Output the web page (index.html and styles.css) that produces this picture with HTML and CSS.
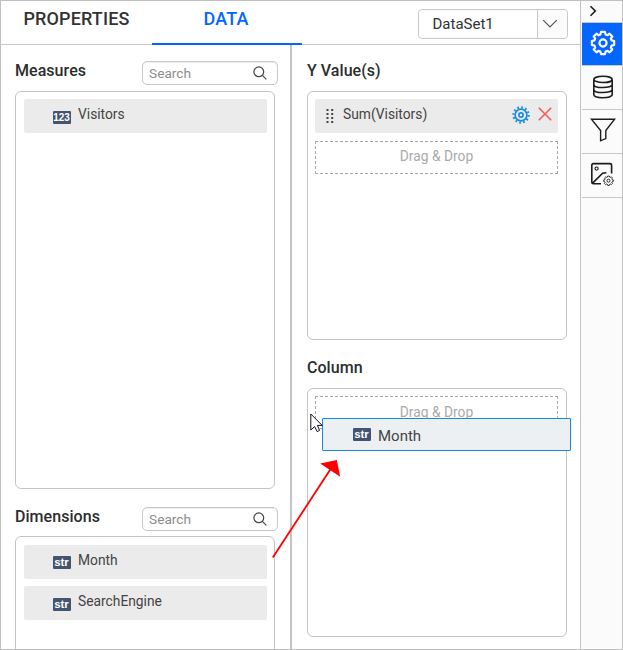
FILE: index.html
```html
<!DOCTYPE html>
<html lang="en">
<head>
<meta charset="utf-8">
<title>Data panel</title>
<link rel="stylesheet" href="styles.css">
</head>
<body>
<svg class="defs" aria-hidden="true">
  <symbol id="cog" viewBox="-12 -12 24 24">
    <path d="M10.3-1.8V1.8L7.9 2.4 7.2 4.2 8.6 6 6 8.6 4.2 7.2 2.4 7.9 1.8 10.3H-1.8L-2.4 7.9-4.2 7.2-6 8.6-8.6 6-7.2 4.2-7.9 2.4-10.3 1.8V-1.8L-7.9-2.4-7.2-4.2-8.6-6-6-8.6-4.2-7.2-2.4-7.9-1.8-10.3H1.8L2.4-7.9 4.2-7.2 6-8.6 8.6-6 7.2-4.2 7.9-2.4Z"/>
    <circle r="3.3"/>
  </symbol>
  <symbol id="lens" viewBox="0 0 14 14">
    <circle cx="5.8" cy="5.8" r="4.9"/>
    <path d="M9.4 9.4 13.3 13.3"/>
  </symbol>
</svg>
<div class="window">
  <div class="designer">
    <header class="tabs">
      <div class="tab">PROPERTIES</div>
      <div class="tab active">DATA</div>
      <div class="select"><span class="select-value">DataSet1</span><span class="select-toggle"><svg width="16" height="10" viewBox="0 0 16 10"><path d="M1.2 1.2 8 8 14.8 1.2"/></svg></span></div>
    </header>
    <div class="columns">
      <section class="fields">
        <div class="head">
          <h2>Measures</h2>
          <div class="search"><span>Search</span><svg width="14" height="14"><use href="#lens"/></svg></div>
        </div>
        <div class="box measures">
          <div class="item"><span class="badge">123</span><span class="name">Visitors</span></div>
        </div>
        <div class="head second">
          <h2>Dimensions</h2>
          <div class="search"><span>Search</span><svg width="14" height="14"><use href="#lens"/></svg></div>
        </div>
        <div class="box dimensions">
          <div class="item"><span class="badge raised">str</span><span class="name">Month</span></div>
          <div class="item"><span class="badge">str</span><span class="name">SearchEngine</span></div>
        </div>
      </section>
      <section class="bindings">
        <h2>Y Value(s)</h2>
        <div class="box values">
          <div class="item bound">
            <svg class="grip" width="8" height="15" viewBox="0 0 8 15"><path d="M1.5 1V15M6.2 1V15"/></svg>
            <span class="name">Sum(Visitors)</span>
            <svg class="item-gear" width="18" height="18" viewBox="-9 -9 18 18"><circle r="5.9"/><circle r="2.1"/><circle class="teeth" r="7.6"/></svg>
            <svg class="remove" width="14" height="14" viewBox="0 0 14 14"><path d="M.8.8 13.2 13.2M13.2.8.8 13.2"/></svg>
          </div>
          <div class="drop">Drag &amp; Drop</div>
        </div>
        <h2 class="column-title">Column</h2>
        <div class="box column">
          <div class="drop">Drag &amp; Drop</div>
        </div>
      </section>
    </div>
  </div>
  <nav class="rail">
    <div class="rail-toggle"><svg width="8" height="12" viewBox="0 0 8 12"><path d="M1.5 1.2 6.3 6 1.5 10.8"/></svg></div>
    <div class="rail-item selected"><svg width="26" height="26"><use href="#cog"/></svg></div>
    <div class="rail-item"><svg width="22" height="24" viewBox="0 0 22 24"><ellipse cx="11" cy="4.4" rx="9.2" ry="3.1"/><path d="M1.8 4.4V19.6C1.8 23.8 20.2 23.8 20.2 19.6V4.4M1.8 9.4C1.8 13.6 20.2 13.6 20.2 9.4M1.8 14.4C1.8 18.6 20.2 18.6 20.2 14.4"/></svg></div>
    <div class="rail-item"><svg class="funnel" width="26" height="24" viewBox="0 0 26 24"><path d="M1.4 1.2H24.6L15.8 12.6V20.6L10.6 22.8V12.6Z"/></svg></div>
    <div class="rail-item"><svg width="24" height="24" viewBox="0 0 24 24"><path d="M11 21.8H3.4Q1.8 21.8 1.8 20.2V3.2Q1.8 1.6 3.4 1.6H20Q21.6 1.6 21.6 3.2V11.5M2.4 21.4 12.6 11.2 16.4 10.8"/><circle class="fine" cx="6.6" cy="6.6" r="1.6"/><use class="mini" href="#cog" x="13" y="13.2" width="11" height="11"/></svg></div>
  </nav>
  <div class="ghost"><span class="badge">str</span><span>Month</span></div>
  <svg class="pointer" width="14" height="20" viewBox="0 0 14 20"><path d="M.8 1V17L4.6 13.6 7.2 18.6 9.6 17.4 7.4 12.4H12.2Z"/></svg>
  <svg class="arrow" width="72" height="102" viewBox="0 0 72 102"><path class="shaft" d="M.8 99.6 58.6 11"/><path d="M64.8 2 48.2 5.4 68.2 18.8Z"/></svg>
</div>
</body>
</html>
```

FILE: styles.css
```css
* { box-sizing: border-box; }
body { margin: 0; font-family: Roboto, "Liberation Sans", sans-serif; color: #333; }
svg { display: block; fill: none; flex: none; }
.defs { position: absolute; width: 0; height: 0; }

.window { position: relative; display: flex; width: 623px; height: 650px; border: 1px solid #c0c0c0; overflow: hidden; background: #fff; }
.designer { width: 579px; display: flex; flex-direction: column; }

.tabs { display: flex; height: 44px; flex: none; border-bottom: 1px solid #c8c8c8; }
.tab { width: 151px; height: 44px; padding: 6px 0 0; text-align: center; font-size: 18px; letter-spacing: .15px; line-height: 24px; font-weight: 500; }
.tab.active { width: 150px; padding-right: 2px; color: #0565ff; border-bottom: 2px solid #0565ff; }
.select { display: flex; width: 150px; height: 30px; margin: 8px 0 0 116px; border: 1px solid #c8c8c8; border-radius: 4px; font-size: 15px; line-height: 28px; }
.select-value { width: 118px; padding-left: 13.5px; }
.select-toggle { flex: 1; display: flex; align-items: center; padding-left: 4px; border-left: 1px solid #c8c8c8; background: #fbfbfb; border-radius: 0 4px 4px 0; }
.select-toggle svg { stroke: #555; stroke-width: 1.2; }

.columns { flex: 1; display: flex; min-height: 0; }
.fields { width: 291px; padding: 16px 0 0 14px; border-right: 2px solid #c4c4c4; }
.bindings { flex: 1; padding: 16px 0 0 15px; }
h2 { margin: 0; font-size: 16px; line-height: 20px; font-weight: 500; color: #2d2d2d; letter-spacing: .05px; }
.bindings h2 { height: 30px; }
.head { display: flex; justify-content: space-between; width: 263px; height: 30px; }
.head.second { margin-top: 18px; height: 29px; }
.search { display: flex; justify-content: space-between; width: 136px; height: 24px; padding: 4px 10px 0 6px; border: 1px solid #c8c8c8; border-radius: 5px; box-shadow: inset 0 1px 1px #eee; color: #8c8c8c; font-size: 13.7px; line-height: 15px; }
.search svg { stroke: #444; stroke-width: 1.2; }

.box { width: 260px; padding: 7px 8px; border: 1px solid #c4c4c4; border-radius: 6px; }
.bindings .box { padding-left: 7px; }
.measures { height: 398px; }
.dimensions { height: 130px; padding-top: 8px; }
.values { height: 249px; }
.column { height: 249px; }
.bindings .column-title { margin-top: 18px; }
.item { display: flex; width: 243px; height: 34px; border-radius: 2px; background: #ebebeb; font-size: 13.8px; line-height: 18px; color: #444; }
.item + .item { margin-top: 7px; }
.badge { width: 18px; height: 13px; margin: 12px 7.5px 0 28.5px; border-radius: 1px; background: #44546f; color: #fff; font: bold 11.5px/12px "Liberation Sans", sans-serif; text-align: center; }
.item:only-child .badge { font-size: 10px; line-height: 13px; }
.badge.raised { margin-top: 11px; }
.name { margin-top: 6px; }
.bound .name { flex: 1; margin-left: 9px; }
.grip { margin: 9px 0 0 11px; stroke: #444; stroke-width: 2; stroke-dasharray: 2 2; }
.item-gear { margin-top: 7px; stroke: #1a8be0; stroke-width: 1.7; }
.item-gear .teeth { stroke-width: 2.2; stroke-dasharray: 1.7 2.28; }
.remove { margin: 8px 6.5px 0 8px; stroke: #f25c5c; stroke-width: 1.6; }
.drop { width: 243px; height: 33px; margin-top: 8px; border: 1px dashed #a8a8a8; text-align: center; font-size: 13.8px; line-height: 29px; color: #aaa; }
.column .drop { margin-top: 0; line-height: 31px; }

.rail { width: 42px; padding-left: 1px; border-left: 1px solid #c4c4c4; background: #fbfbfb; }
.rail-toggle { height: 22px; padding: 4px 0 0 7px; border-bottom: 1px solid #c8c8c8; }
.rail svg { stroke: #1c1c1c; stroke-width: 1.6; }
.rail-item { display: flex; align-items: center; justify-content: center; height: 44px; padding: 0 0 2px 1px; border-bottom: 1px solid #c8c8c8; }
.rail-item:nth-child(4) { padding-bottom: 4px; }
.rail-item:last-child { padding: 0 1px 4px 0; }
.rail-item.selected { height: 43px; background: #0565ff; }
.rail .selected svg { stroke: #fff; stroke-width: 2; stroke-linejoin: round; }
.rail .funnel { stroke-width: 1.4; }
.fine { stroke-width: 1.1; }
.mini { stroke-width: 2; }

.ghost { position: absolute; left: 321px; top: 417px; display: flex; width: 249px; height: 33px; border: 1px solid #1389e0; border-radius: 1px; background: #edf0f3; font-size: 15px; line-height: 34px; color: #444; }
.ghost .badge { margin: 9px 7.5px 0 29.5px; }
.pointer { position: absolute; left: 309px; top: 412px; fill: #fff; stroke: #101020; stroke-width: 1; }
.arrow { position: absolute; left: 271px; top: 457px; fill: #f00; }
.shaft { stroke: #f00; stroke-width: 1.8; }
```
